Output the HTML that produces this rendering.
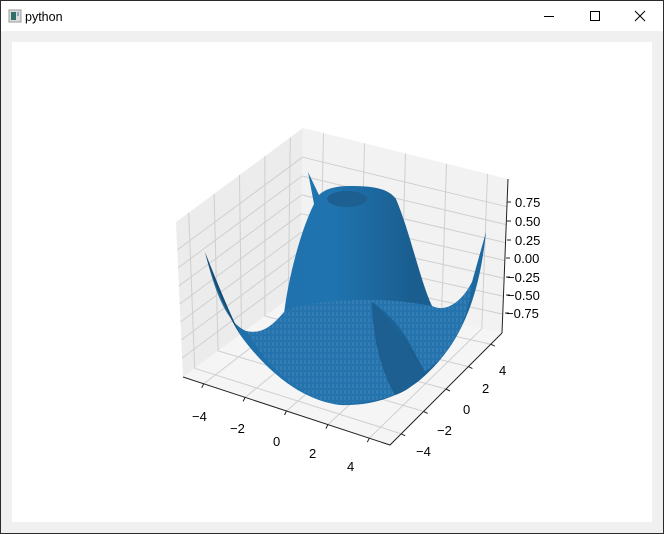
<!DOCTYPE html>
<html><head><meta charset="utf-8"><style>
html,body{margin:0;padding:0;width:664px;height:534px;overflow:hidden;background:#fff;font-family:"Liberation Sans",sans-serif}
.win{position:absolute;left:0;top:0;width:662px;height:532px;border:1px solid #2b2b2b;background:#f0f0f0}
.title{position:absolute;left:0;top:0;width:662px;height:30px;background:#fff}
.canvas{position:absolute;left:11px;top:41px;width:640px;height:480px;background:#fff}
</style></head><body>
<div class="win">
<div class="title">
<svg width="662" height="30" style="position:absolute;left:0;top:0">
<rect x="8" y="9" width="12" height="12" fill="#ddd" stroke="#999"/>
<rect x="10" y="11" width="5" height="8" fill="#2f6f6a"/>
<rect x="16" y="11" width="2" height="4" fill="#8ab"/>
<text x="24" y="20" font-family="Liberation Sans, sans-serif" font-size="12.5" fill="#000">python</text>
<line x1="543" y1="15.5" x2="553" y2="15.5" stroke="#000"/>
<rect x="589.5" y="10.5" width="9" height="9" fill="none" stroke="#000"/>
<path d="M634,10 L644,20 M644,10 L634,20" stroke="#000" stroke-width="1"/>
</svg>
</div>
<div class="canvas"></div>
<svg width="664" height="534" style="position:absolute;left:-1px;top:-1px" font-family="Liberation Sans, sans-serif" font-size="13">
<defs>
<linearGradient id="bump" x1="0" y1="0" x2="1" y2="0">
<stop offset="0" stop-color="#1f6da6"/><stop offset="0.45" stop-color="#1f74b0"/><stop offset="0.75" stop-color="#1a5d8e"/><stop offset="1" stop-color="#1c6aa2"/>
</linearGradient>
<pattern id="mesh" width="4" height="6" patternUnits="userSpaceOnUse">
<rect width="4" height="6" fill="#2473ad"/><line x1="1" y1="0" x2="1" y2="4" stroke="#5f9bc8" stroke-width="0.5"/>
</pattern>
</defs>
<polygon points="176,222 303,128 300,290 183,377" fill="#ececec"/>
<polygon points="303,128 508,179 502,333 300,290" fill="#f2f2f2"/>
<polygon points="183,377 300,290 502,333 390,445" fill="#f5f5f5"/>
<g stroke="#cfcfcf" stroke-width="1" fill="none">
<path d="M188.7,212.6L194.7,368.3M214.1,193.8L218.1,350.9M239.5,175L241.5,333.5M264.9,156.2L264.9,316.1M290.3,137.4L288.3,298.7"/>
<path d="M177.3,249.9L302.5,157.2M178.1,267.9L302.1,176M178.9,286L301.8,194.9M179.7,304L301.4,213.7M180.5,322L301.1,232.5M181.3,340L300.7,251.3M182.1,358L300.4,270.1"/>
<path d="M323.5,133.1L320.2,294.3M364.5,143.3L360.6,302.9M405.5,153.5L401,311.5M446.5,163.7L441.4,320.1M487.5,173.9L481.8,328.7"/>
<path d="M302.5,157.2L506.9,206.7M302.1,176L506.2,224.6M301.8,194.9L505.5,242.6M301.4,213.7L504.8,260.5M301.1,232.5L504.1,278.3M300.7,251.3L503.4,296.2M300.4,270.1L502.7,314.1"/>
<path d="M203.7,383.8L320.2,294.3M245.1,397.4L360.6,302.9M286.5,411L401,311.5M327.9,424.6L441.4,320.1M369.3,438.2L481.8,328.7"/>
<path d="M194.7,368.3L401.2,433.8M218.1,350.9L423.6,411.4M241.5,333.5L446,389M264.9,316.1L468.4,366.6M288.3,298.7L490.8,344.2"/>
</g>
<g stroke="#222" stroke-width="1" fill="none">
<path d="M183,377L390,445L502,333M508,179L502,333"/>
<path d="M203.7,383.8l-2,4M245.1,397.4l-2,4M286.5,411l-2,4M327.9,424.6l-2,4M369.3,438.2l-2,4"/>
<path d="M401.2,433.8l4,2M423.6,411.4l4,2M446,389l4,2M468.4,366.6l4,2M490.8,344.2l4,2"/>
<path d="M507,202h4M507,221h4M507,240h4M506,258h4M506,277h4M506,295h4M505,313h4"/>
</g>
<path d="M205,252 C215,292 226,322 246,331 C262,335 273,325 284,314 C288,280 300,232 314,204 L308,172 L319,195 C326,188 338,186 350,186 C372,186 388,188 396,199 C410,232 420,280 432,306 C446,313 462,302 472,282 L486,232 C479,300 460,346 420,380 C395,400 366,406 340,405 C300,400 266,370 241,336 C226,312 212,282 205,252 Z" fill="url(#bump)"/>
<path d="M246,331 C262,335 273,325 284,312 C300,302 340,300 372,300 C392,300 410,302 432,306 C446,313 462,302 472,282 C468,320 455,350 425,372 C410,345 400,320 372,302 C372,330 380,370 395,395 C370,403 345,405 330,403 C300,396 268,368 246,331 Z" fill="url(#mesh)"/>
<path d="M372,302 C392,320 405,345 425,372 C415,385 405,392 395,395 C380,370 372,330 372,302 Z" fill="#1c5f90"/>
<ellipse cx="347" cy="199" rx="20" ry="8" fill="#1c5f90"/>
<path d="M205,252 C212,282 226,312 241,336 C232,318 218,285 205,252 Z" fill="#164d75"/>
<g fill="#000">
<text x="515" y="207">0.75</text><text x="515" y="226">0.50</text><text x="515" y="245">0.25</text><text x="514" y="263">0.00</text>
<text x="507" y="282">−0.25</text><text x="507" y="300">−0.50</text><text x="506" y="318">−0.75</text>
<text x="192" y="421">−4</text><text x="230" y="433">−2</text><text x="273" y="446">0</text><text x="309" y="458">2</text><text x="347" y="471">4</text>
<text x="499" y="375">4</text><text x="482" y="393">2</text><text x="463" y="414">0</text><text x="437" y="435">−2</text><text x="416" y="456">−4</text>
</g>
</svg>
</div>
</body></html>
